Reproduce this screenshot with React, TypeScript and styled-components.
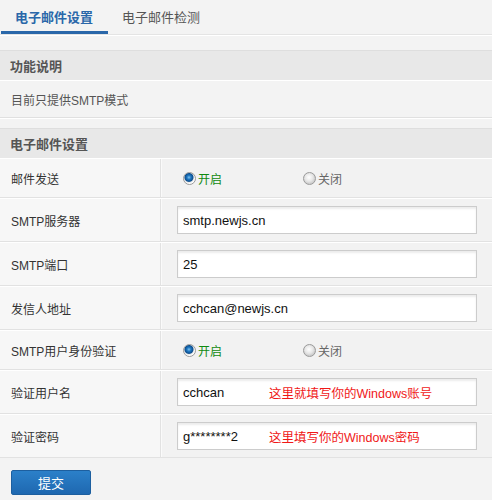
import React, { useState } from 'react';
import styled, { createGlobalStyle } from 'styled-components';

const GlobalStyle = createGlobalStyle`
  html, body {
    margin: 0;
    padding: 0;
    background: #f3f3f3;
  }
  body {
    font-family: 'Liberation Sans', 'Noto Sans CJK SC', sans-serif;
    font-size: 12px;
    color: #333;
  }
`;

const Page = styled.div`
  width: 492px;
  height: 500px;
  overflow: hidden;
  background: #f3f3f3;
`;

const TabBar = styled.div`
  display: flex;
  height: 34px;
  padding-left: 1px;
  border-bottom: 1px solid #e4e4e4;
  box-shadow: 0 1px 0 #fff;
`;

const Tab = styled.div<{ $active?: boolean }>`
  display: flex;
  align-items: center;
  padding: 0 15px 0 14px;
  height: 34px;
  box-sizing: border-box;
  font-size: 13px;
  cursor: pointer;
  color: ${(p) => (p.$active ? '#2a67a9' : '#555')};
  font-weight: ${(p) => (p.$active ? 'bold' : 'normal')};
  border-bottom: 3px solid ${(p) => (p.$active ? '#2a67a9' : 'transparent')};
  padding-top: 1px;
`;

const Section = styled.div<{ $gap: number }>`
  margin-top: ${(p) => p.$gap}px;
`;

const SectionHeader = styled.div`
  height: 29px;
  display: flex;
  align-items: center;
  padding-left: 10px;
  background: #e8e8e8;
  border-top: 1px solid #dedede;
  font-size: 13px;
  font-weight: bold;
  color: #555;
`;

const DescRow = styled.div`
  height: 36px;
  display: flex;
  align-items: center;
  padding-left: 11px;
  color: #555;
  border-top: 1px solid #fff;
  border-bottom: 1px solid #e0e0e0;
  box-shadow: 0 1px 0 #fff;
`;

const FormRow = styled.div<{ $tall?: boolean }>`
  display: grid;
  grid-template-columns: 161px 1fr;
  height: ${(p) => (p.$tall ? 44 : 40)}px;
  border-top: 1px solid #fff;
  border-bottom: 1px solid #e2e2e2;
  box-sizing: border-box;
`;

const LabelCell = styled.div`
  display: flex;
  align-items: center;
  padding-left: 11px;
  background: #f7f7f7;
  border-right: 1px solid #e2e2e2;
  color: #333;
`;

const FieldCell = styled.div`
  display: flex;
  align-items: center;
  padding-left: 15px;
  background: #f2f2f2;
  border-left: 1px solid #fafafa;
`;

const RadioGroup = styled.div`
  display: flex;
  align-items: center;
  padding-left: 6px;
`;

const RadioItem = styled.label<{ $checked?: boolean }>`
  display: flex;
  align-items: center;
  width: 120px;
  gap: 2px;
  cursor: pointer;
  font-weight: normal;
  color: ${(p) => (p.$checked ? '#108a10' : '#666')};
`;

const RadioDot = styled.span<{ $checked?: boolean }>`
  width: 11px;
  height: 11px;
  border-radius: 50%;
  border: 1px solid #9a9a9a;
  background: ${(p) =>
    p.$checked
      ? 'radial-gradient(circle at 45% 40%, #7fc3ef 0, #1f78c2 2px, #0d4f8f 4px, #e8e8e8 5px, #fff 6px)'
      : 'radial-gradient(circle at 45% 40%, #fff 0, #e6e6e6 4px, #cfcfcf 6px)'};
`;

const InputBox = styled.div`
  display: flex;
  align-items: center;
  width: 300px;
  height: 28px;
  box-sizing: border-box;
  background: #fff;
  border: 1px solid #cccccc;
  box-shadow: inset 0 2px 2px #ececec;
`;

const TextInput = styled.input<{ $narrow?: boolean }>`
  border: none;
  outline: none;
  background: transparent;
  padding: 0 0 0 5px;
  width: ${(p) => (p.$narrow ? '86px' : '280px')};
  font-family: 'Liberation Sans', 'Noto Sans CJK SC', sans-serif;
  font-size: 13px;
  color: #111;
`;

const Hint = styled.span`
  color: #f01818;
  font-size: 12.5px;
  white-space: nowrap;
`;

const Footer = styled.div`
  padding: 12px 0 0 11px;
`;

const SubmitButton = styled.button`
  width: 80px;
  height: 25px;
  border: 1px solid #1d5f9f;
  border-radius: 2px;
  background: linear-gradient(#2b80c9, #1f68b0);
  color: #fff;
  font-family: 'Liberation Sans', 'Noto Sans CJK SC', sans-serif;
  font-size: 13px;
  cursor: pointer;
`;

function Radio({ name, value, onChange }: { name: string; value: boolean; onChange: (v: boolean) => void }) {
  return (
    <RadioGroup>
      <RadioItem $checked={value} onClick={() => onChange(true)}>
        <RadioDot $checked={value} />
        开启
      </RadioItem>
      <RadioItem $checked={!value} onClick={() => onChange(false)}>
        <RadioDot $checked={!value} />
        关闭
      </RadioItem>
      <input type="hidden" name={name} value={value ? '1' : '0'} />
    </RadioGroup>
  );
}

const App = () => {
  const [sendOn, setSendOn] = useState(true);
  const [authOn, setAuthOn] = useState(true);

  return (
    <Page>
      <GlobalStyle />
      <TabBar>
        <Tab $active>电子邮件设置</Tab>
        <Tab>电子邮件检测</Tab>
      </TabBar>

      <Section $gap={15}>
        <SectionHeader>功能说明</SectionHeader>
        <DescRow>目前只提供SMTP模式</DescRow>
      </Section>

      <Section $gap={10}>
        <SectionHeader>电子邮件设置</SectionHeader>
        <FormRow>
          <LabelCell>邮件发送</LabelCell>
          <FieldCell>
            <Radio name="send" value={sendOn} onChange={setSendOn} />
          </FieldCell>
        </FormRow>
        <FormRow $tall>
          <LabelCell>SMTP服务器</LabelCell>
          <FieldCell>
            <InputBox>
              <TextInput defaultValue="smtp.newjs.cn" />
            </InputBox>
          </FieldCell>
        </FormRow>
        <FormRow $tall>
          <LabelCell>SMTP端口</LabelCell>
          <FieldCell>
            <InputBox>
              <TextInput defaultValue="25" />
            </InputBox>
          </FieldCell>
        </FormRow>
        <FormRow $tall>
          <LabelCell>发信人地址</LabelCell>
          <FieldCell>
            <InputBox>
              <TextInput defaultValue="cchcan@newjs.cn" />
            </InputBox>
          </FieldCell>
        </FormRow>
        <FormRow>
          <LabelCell>SMTP用户身份验证</LabelCell>
          <FieldCell>
            <Radio name="auth" value={authOn} onChange={setAuthOn} />
          </FieldCell>
        </FormRow>
        <FormRow $tall>
          <LabelCell>验证用户名</LabelCell>
          <FieldCell>
            <InputBox>
              <TextInput $narrow defaultValue="cchcan" />
              <Hint>这里就填写你的Windows账号</Hint>
            </InputBox>
          </FieldCell>
        </FormRow>
        <FormRow $tall>
          <LabelCell>验证密码</LabelCell>
          <FieldCell>
            <InputBox>
              <TextInput $narrow defaultValue="g********2" />
              <Hint>这里填写你的Windows密码</Hint>
            </InputBox>
          </FieldCell>
        </FormRow>
      </Section>

      <Footer>
        <SubmitButton>提交</SubmitButton>
      </Footer>
    </Page>
  );
};

export default App;
